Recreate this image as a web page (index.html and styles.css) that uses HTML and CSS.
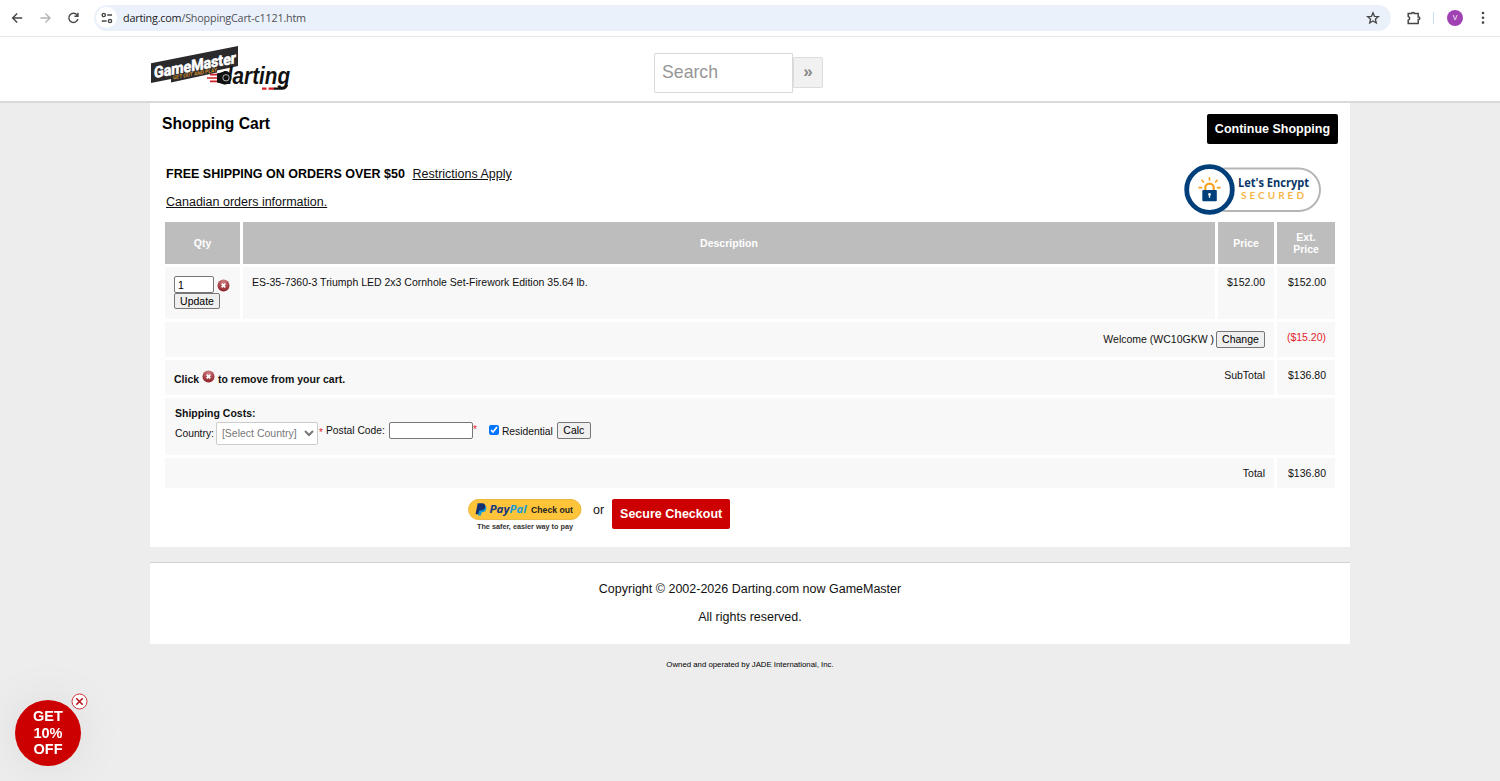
FILE: index.html
```html
<!DOCTYPE html>
<html lang="en">
<head>
  <meta charset="UTF-8">
  <meta name="viewport" content="width=device-width, initial-scale=1.0">
  <title>Shopping Cart</title>
  <link rel="stylesheet" href="styles.css">
</head>
<body>
  <svg width="0" height="0" class="defs">
    <defs>
      <radialGradient id="remove-fill" cx="50%" cy="20%" r="80%">
        <stop offset="0" stop-color="#cf8083"/>
        <stop offset="1" stop-color="#8c1f26"/>
      </radialGradient>
      <symbol id="remove" viewBox="0 0 13 13">
        <circle cx="6.5" cy="6.5" r="6" fill="url(#remove-fill)"/>
        <path d="M4.7 4.7l3.6 3.6M8.3 4.7L4.7 8.3" stroke="#fff" stroke-width="1.7"/>
      </symbol>
    </defs>
  </svg>

  <!-- browser toolbar -->
  <div class="toolbar">
    <svg class="nav-icons" width="94" height="36" fill="none" stroke="#454746" stroke-width="1.4">
      <path d="M22.2 18H12.8M17.2 13.4L12.6 18l4.6 4.6"/>
      <path d="M40.4 18h9.4M45.4 13.4L50 18l-4.6 4.6" stroke="#b4b5b6"/>
      <path d="M77.3 15.3A4.6 4.6 0 1 0 77.9 19M78 12.8v3.4h-3.5"/>
    </svg>
    <div class="address">
      <span class="site-info">
        <svg width="12" height="12" fill="none" stroke="#454746" stroke-width="1.4">
          <circle cx="2.8" cy="3" r="1.6"/><path d="M6.2 3H11M.8 9h4.8"/><circle cx="9" cy="9" r="1.6"/>
        </svg>
      </span>
      <span class="url">darting.com<span>/ShoppingCart-c1121.htm</span></span>
      <svg class="star" width="14" height="14" fill="none" stroke="#454746" stroke-width="1.3">
        <path d="M7 1.7l1.5 3.6 3.9.3-3 2.6.9 3.8L7 10l-3.3 2 .9-3.8-3-2.6 3.9-.3z"/>
      </svg>
    </div>
    <svg class="puzzle" width="16" height="16" fill="none" stroke="#454746" stroke-width="1.5">
      <path d="M2.2 3.4h3.5V3a1.5 1.2 0 0 1 2.6 0v.4h3.9v3.5h.3a1.3 1.3 0 0 1 0 2.6h-.3v4H2.2v-3.3a1.9 1.9 0 0 0 0-3.7z"/>
    </svg>
    <span class="divider"></span>
    <span class="avatar">V</span>
    <svg class="dots" width="4" height="14" fill="#454746">
      <circle cx="2" cy="2" r="1.3"/><circle cx="2" cy="6.8" r="1.3"/><circle cx="2" cy="11.6" r="1.3"/>
    </svg>
  </div>

  <header class="header">
    <div class="header-inner">
      <svg class="logo" width="142" height="52" viewBox="0 0 142 52">
        <path d="M1 18.300L88 1v20L67 25.500v2L21 37.500V34L1 38z" fill="#2a2a2c"/>
        <g transform="translate(4 33) skewY(-10.300)">
          <text class="logo-game" x="0" y="0" textLength="82" lengthAdjust="spacingAndGlyphs">GameMaster</text>
          <text class="logo-sub" x="19" y="5" textLength="44" lengthAdjust="spacingAndGlyphs">GET OUT AND PLAY</text>
        </g>
        <path d="M60 29.6h9M57 33h12M60 36.4h9" stroke="#d3202b" stroke-width="1.700"/>
        <path d="M67 28.500l8-2v13l-8-2z" fill="#111"/>
        <circle cx="75" cy="33" r="6.500" fill="#111"/>
        <text class="logo-dart" x="70" y="39.400" textLength="70" lengthAdjust="spacingAndGlyphs">darting</text>
        <circle cx="76" cy="32.800" r="3.200" fill="#111" stroke="#ddd" stroke-width=".8"/>
        <path d="M112 43.700h4.500M118.500 43.700h6" stroke="#d3202b" stroke-width="2.200"/>
        <path d="M124 43.700h8q4 0 5-4" stroke="#111" stroke-width="2.200" fill="none"/>
      </svg>
      <form class="search">
        <input type="text" placeholder="Search">
        <button type="button">»</button>
      </form>
    </div>
  </header>

  <main class="main">
    <div class="title-row">
      <h1>Shopping Cart</h1>
      <a class="btn btn-black">Continue Shopping</a>
    </div>

    <div class="info-row">
      <div class="info">
        <p><b>FREE SHIPPING ON ORDERS OVER $50</b> <a>Restrictions Apply</a></p>
        <p><a class="canadian">Canadian orders information.</a></p>
      </div>
      <svg class="secured" width="138" height="52" viewBox="0 0 138 52">
        <rect x="20" y="4.500" width="116" height="42.500" rx="21.200" fill="#fff" stroke="#b5b5b5" stroke-width="2"/>
        <circle cx="25.500" cy="25.500" r="22.800" fill="#fff" stroke="#003f7a" stroke-width="4.800"/>
        <path d="M25.500 13.200v3.600M17.600 15.700l2.200 2.700M33.400 15.700l-2.200 2.700M14.400 23.600h3.800M32.800 23.600h3.800" stroke="#f9a11d" stroke-width="1.600"/>
        <path d="M21.300 26.500v-2.700a4.200 4.200 0 0 1 8.400 0v2.700" fill="none" stroke="#f9a11d" stroke-width="2.200"/>
        <rect x="18.300" y="26" width="14.500" height="11.300" rx="1" fill="#003f7a"/>
        <path d="M25.500 30v3.800" stroke="#fff" stroke-width="1.300"/>
        <circle cx="25.500" cy="30.400" r="1.300" fill="#fff"/>
        <text class="lets" x="54" y="23.200" textLength="71" lengthAdjust="spacingAndGlyphs">Let's Encrypt</text>
        <text class="sec" x="57" y="35.400" textLength="63">SECURED</text>
      </svg>
    </div>

    <div class="cart">
      <div class="cell head">Qty</div>
      <div class="cell head">Description</div>
      <div class="cell head">Price</div>
      <div class="cell head">Ext.<br>Price</div>

      <div class="cell qty">
        <div class="qty-line">
          <input type="text" value="1">
          <svg width="13" height="13"><use href="#remove"/></svg>
        </div>
        <button type="button">Update</button>
      </div>
      <div class="cell">ES-35-7360-3 Triumph LED 2x3 Cornhole Set-Firework Edition 35.64 lb.</div>
      <div class="cell right">$152.00</div>
      <div class="cell right">$152.00</div>

      <div class="cell span3 welcome">
        <span>Welcome (WC10GKW )</span>
        <button type="button">Change</button>
      </div>
      <div class="cell right discount">($15.20)</div>

      <div class="cell span3 subtotal">
        <b>Click <svg width="13" height="13"><use href="#remove"/></svg> to remove from your cart.</b>
        <span>SubTotal</span>
      </div>
      <div class="cell right">$136.80</div>

      <div class="cell span4 shipping">
        <b>Shipping Costs:</b>
        <div class="ship-form">
          <label class="country">Country:</label>
          <select><option>[Select Country]</option></select>
          <span class="star-req">*</span>
          <label class="postal">Postal Code:</label>
          <input type="text" class="postal-input">
          <span class="star-req second">*</span>
          <input type="checkbox" checked>
          <label class="residential">Residential</label>
          <button type="button">Calc</button>
        </div>
      </div>

      <div class="cell span3 right">Total</div>
      <div class="cell right">$136.80</div>
    </div>

    <div class="checkout">
      <svg class="paypal" width="114" height="33" viewBox="0 0 114 33">
        <rect x=".5" y=".5" width="112.500" height="20" rx="10" fill="#ffc439" stroke="#eeb83f"/>
        <path d="M11.500 6h4.300q3.300.6 2.500 4-.8 3.500-4.600 3.300l-.8 3.200h-3z" fill="#179bd7"/>
        <path d="M9.700 4.300h4.800q3.500.5 2.700 4-.8 3.300-4.700 3.200h-1.300l-.8 3.800H7.500z" fill="#12306f"/>
        <text class="pay" x="21.500" y="14.300" textLength="20" lengthAdjust="spacingAndGlyphs">Pay</text>
        <text class="pay pal" x="41.500" y="14.300" textLength="17" lengthAdjust="spacingAndGlyphs">Pal</text>
        <text class="chk" x="63" y="13.500" textLength="42" lengthAdjust="spacingAndGlyphs">Check out</text>
        <text class="safer" x="9" y="29.600" textLength="96" lengthAdjust="spacingAndGlyphs">The safer, easier way to pay</text>
      </svg>
      <span class="or">or</span>
      <a class="btn btn-red">Secure Checkout</a>
    </div>
  </main>

  <footer class="footer">
    <p>Copyright © 2002-2026 Darting.com now GameMaster</p>
    <p>All rights reserved.</p>
  </footer>
  <p class="owned">Owned and operated by JADE International, Inc.</p>

  <!-- floating coupon teaser -->
  <div class="teaser">
    GET<br>10%<br>OFF
    <svg class="teaser-close" width="17" height="17" fill="none">
      <circle cx="8.500" cy="8.500" r="7.500" fill="#fff" stroke="#d0303a"/>
      <path d="M5.300 5.300l6.400 6.400M11.700 5.300l-6.400 6.400" stroke="#b8141c" stroke-width="1.600"/>
    </svg>
  </div>
</body>
</html>
```
FILE: styles.css
```css
* {
  box-sizing: border-box;
}

body {
  margin: 0;
  height: 781px;
  overflow: hidden;
  background: #ededed;
  color: #111;
  font-family: Arial, "Liberation Sans", sans-serif;
  font-size: 12.5px;
}

h1, p {
  margin: 0;
}

.defs {
  display: block;
}

/* toolbar */
.toolbar {
  display: flex;
  align-items: center;
  height: 37px;
  padding-bottom: 1px;
  background: #fff;
  border-bottom: 1px solid #e6e7ea;
}

.address {
  display: flex;
  align-items: center;
  width: 1297px;
  height: 26px;
  padding: 0 11px 0 2px;
  border-radius: 13px;
  background: #ebf1fa;
}

.site-info {
  display: flex;
  align-items: center;
  justify-content: center;
  width: 21px;
  height: 21px;
  border-radius: 50%;
  background: #fff;
}

.url {
  margin-left: 6px;
  font-family: "Open Sans", "Noto Sans", sans-serif;
  font-size: 10.8px;
  letter-spacing: -.2px;
  color: #202124;
}

.url span {
  color: #4f5257;
}

.star {
  margin-left: auto;
}

.puzzle {
  margin-left: 15px;
}

.divider {
  width: 1px;
  height: 12px;
  margin-left: 11px;
  background: #c9dcf5;
}

.avatar {
  width: 16px;
  height: 16px;
  margin-left: 13px;
  border-radius: 50%;
  background: #a142b4;
  color: #fff;
  font-size: 7px;
  line-height: 16px;
  text-align: center;
}

.dots {
  margin-left: 18px;
}

/* header */
.header {
  height: 66px;
  background: #fff;
  border-bottom: 2px solid #d9d9d9;
}

.header-inner {
  display: flex;
  align-items: flex-start;
  width: 1200px;
  margin: 0 auto;
}

.logo {
  margin-top: 8px;
}

.logo-game {
  font: bold 15.500px "Roboto", sans-serif;
  fill: #fff;
  stroke: #fff;
  stroke-width: .6;
}

.logo-sub {
  font: bold 5.500px "Roboto", sans-serif;
  fill: #c98a2e;
}

.logo-dart {
  font: italic bold 23.500px Arial, "Liberation Sans", sans-serif;
  fill: #111;
}

.search {
  display: flex;
  align-items: center;
  margin: 16px 0 0 362px;
}

.search input {
  width: 139px;
  height: 40px;
  padding: 0 7px 2px;
  border: 1px solid #d9d9d9;
  border-radius: 2px 0 0 2px;
  font: 17.700px Arial, "Liberation Sans", sans-serif;
}

.search input::placeholder {
  color: #979797;
}

.search button {
  width: 30px;
  height: 31px;
  margin-bottom: 2px;
  padding: 0;
  border: 1px solid #dcdcdc;
  border-radius: 0 2px 2px 0;
  background: #f1f1f1;
  color: #888;
  font: bold 17px Arial, "Liberation Sans", sans-serif;
}

/* cart page */
.main {
  width: 1200px;
  height: 444px;
  margin: 0 auto;
  padding: 0 12px;
  background: #fff;
}

.title-row {
  display: flex;
  justify-content: space-between;
  height: 61px;
}

h1 {
  margin-top: 11px;
  font-size: 15.700px;
  line-height: 20px;
  color: #000;
}

.btn {
  height: 30px;
  border-radius: 2px;
  color: #fff;
  font-size: 12.500px;
  font-weight: bold;
  line-height: 30px;
  text-align: center;
}

.btn-black {
  width: 131px;
  margin-top: 11.400px;
  background: #000;
}

.btn-red {
  width: 118px;
  background: #c00;
}

.info-row {
  display: flex;
  justify-content: space-between;
  height: 58px;
  padding: 0 16px 0 4px;
}

.info p {
  line-height: 21px;
  margin-bottom: 7px;
}

.info b {
  color: #000;
  margin-right: 4px;
}

.info a {
  text-decoration: underline;
}

.lets {
  font: bold 12px "Open Sans", sans-serif;
  fill: #0a3768;
}

.sec {
  font: bold 10px "Lato", sans-serif;
  fill: #f7b548;
}

.cart {
  display: grid;
  grid-template-columns: 75px 972px 56px 58px;
  grid-template-rows: 42px 51.5px 35.5px 34.5px 57px 30px;
  gap: 3px;
  margin-left: 3px;
  font-size: 10.500px;
}

.cell {
  padding: 9px 9px 0;
  background: #f8f8f8;
  line-height: 12px;
}

.head {
  display: flex;
  align-items: center;
  justify-content: center;
  padding: 0;
  background: #bdbdbd;
  color: #fff;
  font-weight: bold;
  text-align: center;
}

.right {
  text-align: right;
}

.span3 {
  grid-column: span 3;
}

.span4 {
  grid-column: span 4;
}

.cart input[type="text"],
.cart button {
  display: block;
  height: 17px;
  border: 1px solid #767676;
  border-radius: 2px;
  font: 10.500px Arial, "Liberation Sans", sans-serif;
}

.cart button {
  padding: 0;
  background: #efefef;
  color: #000;
}

.qty-line {
  display: flex;
  align-items: center;
  height: 17px;
}

.cart .qty-line input {
  width: 40px;
  padding: 0 3px;
}

.qty-line svg {
  margin: 2px 0 0 3px;
}

.cart .qty button {
  width: 46px;
  height: 16px;
}

.welcome {
  display: flex;
  justify-content: flex-end;
}

.welcome span {
  margin-top: 2px;
}

.welcome button {
  width: 49px;
  margin-left: 2px;
}

.discount {
  color: #e3242b;
}

.subtotal {
  display: flex;
  justify-content: space-between;
}

.subtotal b {
  margin-top: 2px;
}

.subtotal svg {
  vertical-align: 0;
  margin-top: -1px;
}

.shipping {
  padding-left: 10px;
}

.ship-form {
  display: flex;
  align-items: flex-start;
  margin-top: 3px;
  font-size: 10.300px;
}

.country {
  margin-top: 6px;
}

.ship-form select {
  width: 102px;
  height: 23px;
  margin-left: 2px;
  padding: 0 1px;
  border: 1px solid #ccc;
  border-radius: 2px;
  background: #fff;
  color: #777;
  font: 10.500px Arial, "Liberation Sans", sans-serif;
}

.star-req {
  width: 8px;
  padding-left: 1px;
  margin-top: 5px;
  color: #e3242b;
  font-size: 10px;
}

.postal {
  margin-top: 3px;
}

.cart .ship-form .postal-input {
  width: 84px;
  margin-left: 4px;
}

.second {
  width: 16px;
  padding-left: 0;
  margin-top: 2px;
}

.ship-form input[type="checkbox"] {
  width: 10px;
  height: 10px;
  margin: 3px 0 0;
}

.residential {
  margin: 4px 4px 0 3px;
}

.ship-form button {
  width: 34px;
}

.checkout {
  display: flex;
  align-items: flex-start;
  margin: 11px 0 0 306px;
}

.or {
  margin: 4px 8px 0 11px;
}

.pay {
  font: italic bold 11px "Open Sans", sans-serif;
  fill: #14387f;
}

.pal {
  fill: #179bd7;
}

.chk {
  font: bold 8.500px Arial, "Liberation Sans", sans-serif;
  fill: #222;
}

.safer {
  font: bold 7px Arial, "Liberation Sans", sans-serif;
  fill: #333;
}

/* footer */
.footer {
  width: 1200px;
  height: 82px;
  margin: 15px auto 0;
  padding-top: 16px;
  border-top: 1px solid #d0d0d0;
  background: #fff;
  text-align: center;
}

.footer p {
  margin-bottom: 8px;
  line-height: 20px;
}

.owned {
  margin-top: 16px;
  font-size: 7.800px;
  line-height: 10px;
  text-align: center;
  color: #000;
}

/* coupon teaser */
.teaser {
  position: fixed;
  left: 15px;
  top: 700px;
  width: 66px;
  height: 66px;
  padding-top: 8px;
  border-radius: 50%;
  background: #c00;
  box-shadow: 0 0 50px rgba(0, 0, 0, .08);
  color: #fff;
  font-size: 14.500px;
  font-weight: bold;
  line-height: 16.500px;
  text-align: center;
}

.teaser-close {
  position: absolute;
  left: 56px;
  top: -7px;
}
```
